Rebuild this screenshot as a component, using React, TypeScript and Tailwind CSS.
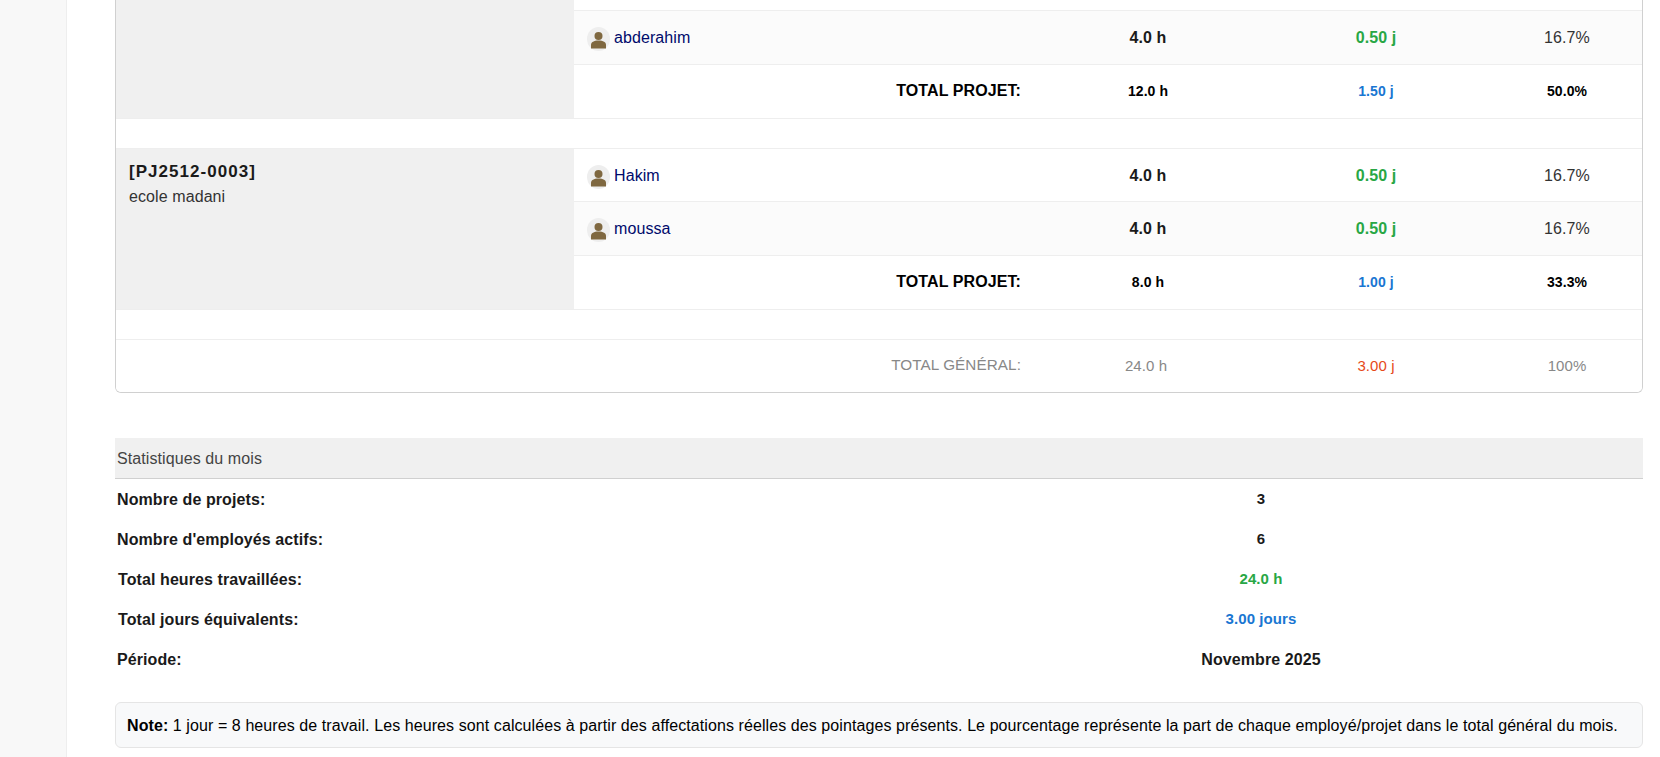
// App.tsx
const font = { fontFamily: '"Liberation Sans", Arial, sans-serif' };

function Avatar() {
  return (
    <svg className="w-[23px] h-[24px] shrink-0" viewBox="0 0 23 24">
      <ellipse cx="11.5" cy="12" rx="11.5" ry="12" fill="#eeeeee" />
      <circle cx="11.5" cy="9" r="4" fill="#7f6840" />
      <path d="M4 21.500v-3.500c0-3 2.800-4.500 7.500-4.500s7.500 1.500 7.500 4.500v3.500z" fill="#7f6840" />
    </svg>
  );
}

function NameCell({ name }: { name: string }) {
  return (
    <td className="pl-[13px] pt-[4px]">
      <div className="flex items-center gap-[4px] text-[16px] text-[#000a6b]">
        <Avatar />
        <span className="-mt-[2px]">{name}</span>
      </div>
    </td>
  );
}

function ValueCells() {
  return (
    <>
      <td className="pl-1 pt-[2px] text-center text-[16px] font-bold text-[#1a1a1a]">4.0 h</td>
      <td className="pt-[2px] text-center text-[16px] font-bold text-[#28a745]">0.50 j</td>
      <td className="pt-[2px] text-center text-[16px] text-[#333333]">16.7%</td>
    </>
  );
}

function EmployeeRow({ name, alt }: { name: string; alt?: boolean }) {
  return (
    <tr className={`h-[54px] border-b border-[#eeeeee] ${alt ? "bg-[#fbfbfb]" : "bg-white"}`}>
      <NameCell name={name} />
      <ValueCells />
    </tr>
  );
}

function TotalRow({ hours, days, pct }: { hours: string; days: string; pct: string }) {
  return (
    <tr className="h-[54px] border-b border-[#eeeeee] bg-white">
      <td className="pr-[11px] text-right text-[16px] font-bold text-black">TOTAL PROJET:</td>
      <td className="pl-1 text-center text-[14px] font-bold text-black">{hours}</td>
      <td className="text-center text-[14px] font-bold text-[#1976d2]">{days}</td>
      <td className="text-center text-[14px] font-bold text-black">{pct}</td>
    </tr>
  );
}

function Spacer() {
  return (
    <tr className="h-[30px] border-b border-[#eeeeee]">
      <td colSpan={5} />
    </tr>
  );
}

const stats = [
  { label: "Nombre de projets:", value: "3", color: "-mt-[2px] text-[#1a1a1a] text-[15px]", pad: "pl-[2px]" },
  { label: "Nombre d'employés actifs:", value: "6", color: "-mt-[2px] text-[#1a1a1a] text-[15px]", pad: "pl-[2px]" },
  { label: "Total heures travaillées:", value: "24.0 h", color: "-mt-[2px] text-[#28a745] text-[15px]", pad: "pl-[3px]" },
  { label: "Total jours équivalents:", value: "3.00 jours", color: "-mt-[2px] text-[#1976d2] text-[15px]", pad: "pl-[3px]" },
  { label: "Période:", value: "Novembre 2025", color: "text-[#1a1a1a] text-[16px]", pad: "pl-[2px]" },
];

export default function App() {
  return (
    <div style={font} className="flex h-[757px] overflow-hidden bg-white tracking-[0.09px] text-[#1a1a1a]">
      <div className="w-[67px] shrink-0 border-r border-[#eeeeee] bg-[#f8f8f8]" />
      <main className="flex-1 pl-[48px] pr-[17px]">
        <div className="w-[1528px] overflow-hidden rounded-b-[6px] border-x border-b border-[#d0d0d0]">
          <table className="w-full table-fixed">
            <colgroup>
              <col className="w-[458px]" />
              <col className="w-[458px]" />
              <col className="w-[228px]" />
              <col className="w-[232px]" />
              <col />
            </colgroup>
            <tbody>
              <tr className="h-[10px] border-b border-[#eeeeee]">
                <td rowSpan={3} className="bg-[#f0f0f0]" />
                <td colSpan={4} />
              </tr>
              <EmployeeRow name="abderahim" alt />
              <TotalRow hours="12.0 h" days="1.50 j" pct="50.0%" />
              <Spacer />
              <tr className="h-[53px] border-b border-[#eeeeee]">
                <td rowSpan={3} className="bg-[#f0f0f0] px-[13px] pt-[10px] align-top">
                  <div className="text-[17px] font-bold tracking-[1.05px] text-[#1a1a1a]">[PJ2512-0003]</div>
                  <div className="mt-[1px] text-[16px] text-[#333333]">ecole madani</div>
                </td>
                <NameCell name="Hakim" />
                <ValueCells />
              </tr>
              <EmployeeRow name="moussa" alt />
              <TotalRow hours="8.0 h" days="1.00 j" pct="33.3%" />
              <Spacer />
              <tr className="h-[53px] bg-white text-[#888888]">
                <td colSpan={2} className="pr-[11px] text-right text-[15.250px]">TOTAL GÉNÉRAL:</td>
                <td className="text-center text-[15px]">24.0 h</td>
                <td className="text-center text-[15px] text-[#e64a19]">3.00 j</td>
                <td className="text-center text-[15px]">100%</td>
              </tr>
            </tbody>
          </table>
        </div>

        <section className="mt-[45px] w-[1528px]">
          <div className="flex h-[41px] items-center border-b border-[#d0d0d0] bg-[#f0f0f0] pl-[2px] pt-[1px] text-[16px] text-[#444444]">
            Statistiques du mois
          </div>
          {stats.map((s) => (
            <div key={s.label} className="grid h-[40px] grid-cols-[764px_1fr] items-center pt-[2px] text-[16px] font-bold">
              <div className={s.pad}>{s.label}</div>
              <div className={`text-center ${s.color}`}>{s.value}</div>
            </div>
          ))}
        </section>

        <div className="mt-[23px] flex h-[46px] w-[1528px] items-center rounded-[6px] border border-[#e5e5e5] bg-[#f8f9fa] pl-[11px] pt-[2px] text-[16px] tracking-[0.085px] text-black">
          <p className="whitespace-nowrap">
            <strong>Note:</strong> 1 jour = 8 heures de travail. Les heures sont calculées à partir des affectations réelles des pointages présents. Le pourcentage représente la part de chaque employé/projet dans le total général du mois.
          </p>
        </div>
      </main>
    </div>
  );
}
